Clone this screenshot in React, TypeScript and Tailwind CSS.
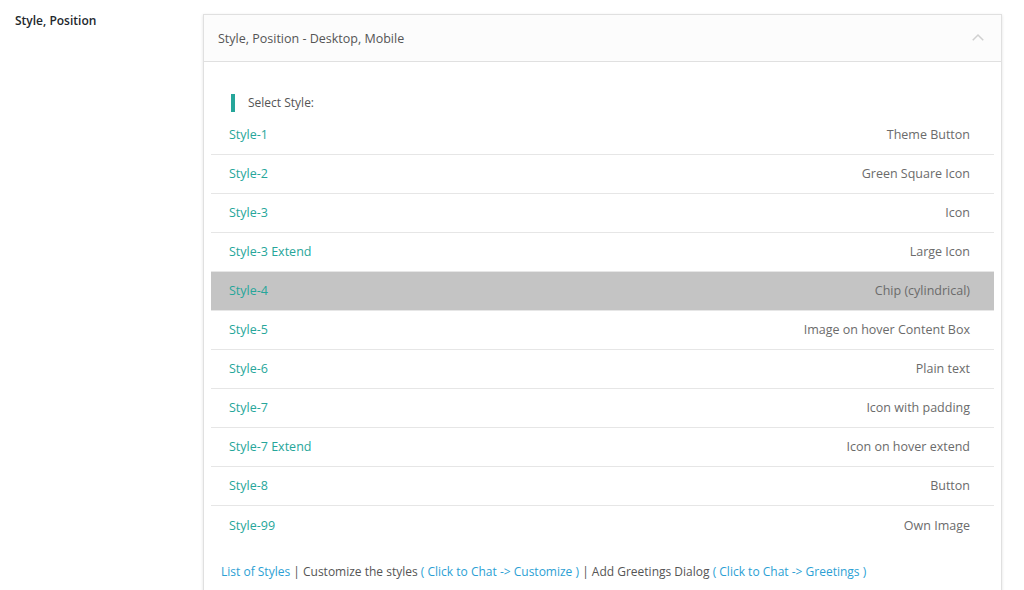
import React from "react";

const styles = [
  { name: "Style-1", label: "Theme Button" },
  { name: "Style-2", label: "Green Square Icon" },
  { name: "Style-3", label: "Icon" },
  { name: "Style-3 Extend", label: "Large Icon" },
  { name: "Style-4", label: "Chip (cylindrical)", active: true },
  { name: "Style-5", label: "Image on hover Content Box" },
  { name: "Style-6", label: "Plain text" },
  { name: "Style-7", label: "Icon with padding" },
  { name: "Style-7 Extend", label: "Icon on hover extend" },
  { name: "Style-8", label: "Button" },
  { name: "Style-99", label: "Own Image" },
];

export default function App() {
  return (
    <div
      className="h-[590px] w-[1024px] overflow-hidden bg-white"
      style={{ fontFamily: '"Open Sans", "Noto Sans", sans-serif' }}
    >
      <div className="flex pt-[14px]">
        {/* Field label */}
        <div className="w-[203px] shrink-0 pl-[15px] text-[12px] leading-[14px] font-semibold text-[#23282d]">
          Style, Position
        </div>

        {/* Collapsible card */}
        <div className="w-[799px] shrink-0 border border-[#e0e0e0] bg-white shadow-[0_1px_3px_rgba(0,0,0,0.12)]">
          <div className="flex h-[47px] items-center justify-between border-b border-[#e0e0e0] bg-[#fcfcfc] pl-[14px] pr-[14px]">
            <span className="pt-[2px] text-[12.5px] text-[#555]">Style, Position - Desktop, Mobile</span>
            <svg width="18" height="18" viewBox="0 0 24 24" fill="none" stroke="#d0d0d0" strokeWidth="2">
              <path d="M5 15l7-7 7 7" />
            </svg>
          </div>

          <div className="px-[7px] pt-[31px]">
            <div className="flex items-center pl-[20px]">
              <span className="h-[18px] w-[4px] bg-[#26a69a]" />
              <span className="ml-[13px] pt-[1px] text-[12px] text-[#555]">Select Style:</span>
            </div>

            <div className="mt-[4px]">
              {styles.map((s, i) => (
                <div
                  key={s.name}
                  className={`flex h-[39px] items-center justify-between pl-[18px] pr-[24px] pt-[1px] text-[12.5px] ${
                    i < styles.length - 1 ? "border-b border-[#e6e6e6]" : ""
                  } ${s.active ? "bg-[#c4c4c4]" : ""}`}
                >
                  <span className="text-[#26a69a]">{s.name}</span>
                  <span className="text-[#6b6b6b]">{s.label}</span>
                </div>
              ))}
            </div>

            <div className="pl-[10px] pt-[18px] text-[12px] text-[#555]">
              <span className="text-[#2c9fd4]">List of Styles</span> | Customize the styles{" "}
              <span className="text-[#2c9fd4]">( Click to Chat -&gt; Customize )</span> | Add Greetings Dialog{" "}
              <span className="text-[#2c9fd4]">( Click to Chat -&gt; Greetings )</span>
            </div>
            <div className="h-[20px]" />
          </div>
        </div>
      </div>
    </div>
  );
}
